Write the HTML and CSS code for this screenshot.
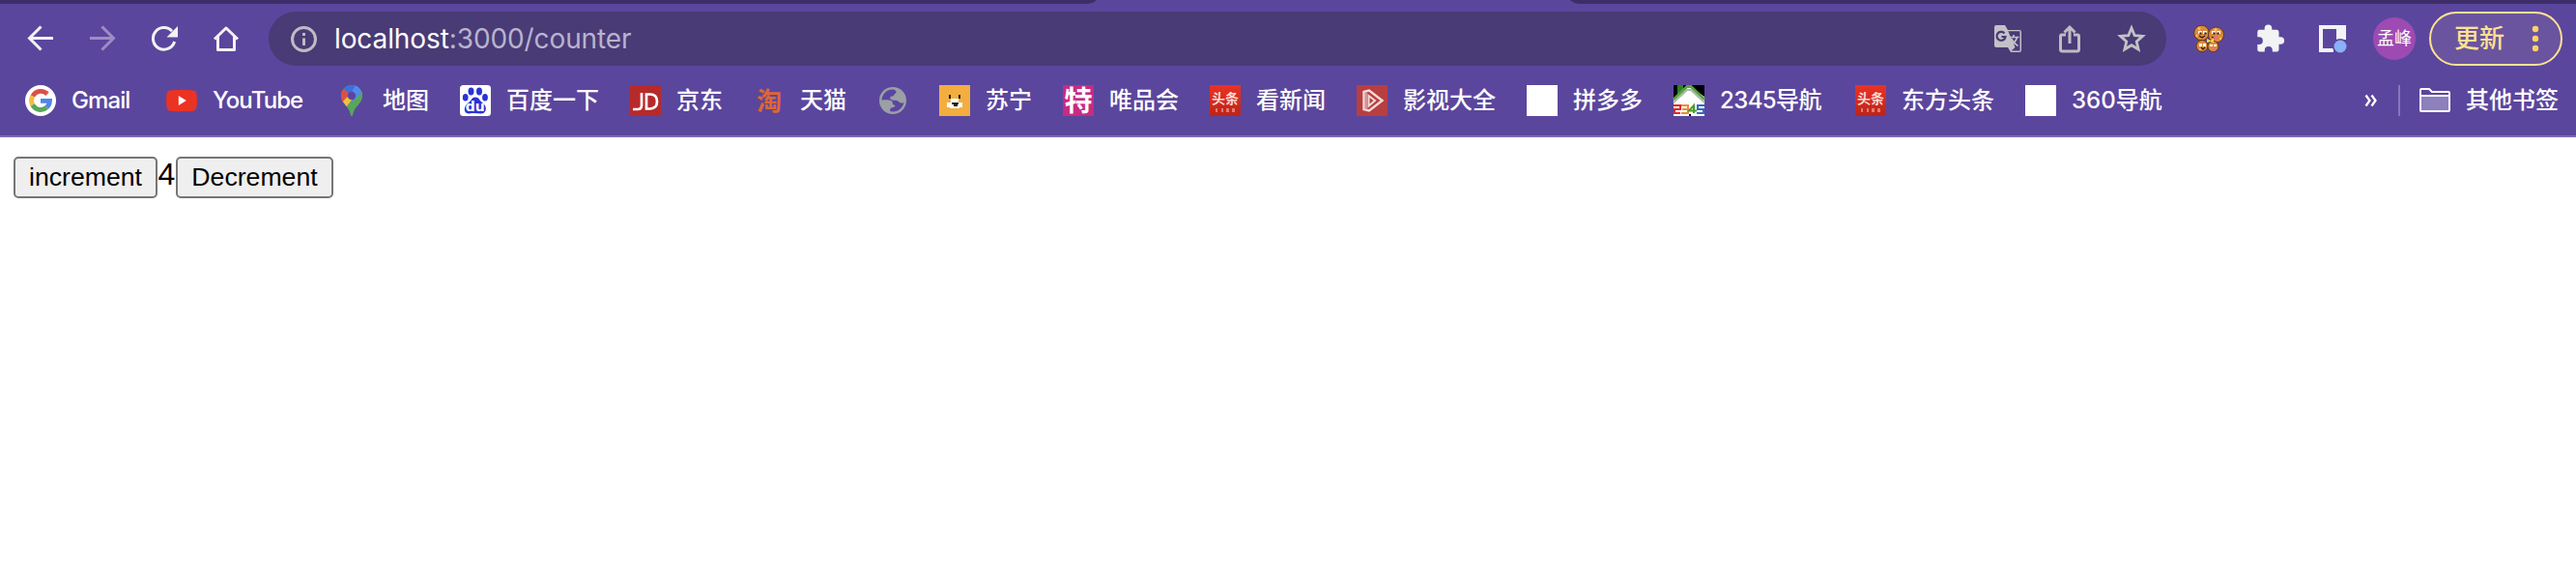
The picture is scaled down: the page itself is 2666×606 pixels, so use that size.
FILE: index.html
```html
<!DOCTYPE html>
<html lang="zh-CN">
<head>
<meta charset="utf-8">
<title>localhost:3000/counter</title>
<link rel="stylesheet" href="styles.css">
</head>
<body>
<header class="chrome">
  <div class="tabstrip"><svg class="tab" width="512" height="4" viewBox="0 0 512 4"><path d="M0 4Q7 4 11 0H501Q505 4 512 4Z" fill="#5b469d"/></svg></div>
  <div class="toolbar">
    <span class="cell"><svg width="32" height="32" viewBox="0 0 32 32" fill="none" stroke="#f1f3f4" stroke-width="3"><path d="M29 15.500H5M16.500 3.500L4.500 15.500L16.500 27.500"/></svg></span>
    <span class="cell"><svg width="32" height="32" viewBox="0 0 32 32" fill="none" stroke="#9c8dc4" stroke-width="3"><path d="M3 15.500H27M15.500 3.500L27.500 15.500L15.500 27.500"/></svg></span>
    <span class="cell"><svg width="32" height="32" viewBox="0 0 32 32"><path d="M26.600 19A11.300 11.300 0 1 1 24 8.200" fill="none" stroke="#f1f3f4" stroke-width="3"/><path d="M30 3V14.500H18.500Z" fill="#f1f3f4"/></svg></span>
    <span class="cell"><svg width="32" height="32" viewBox="0 0 32 32" fill="none" stroke="#f1f3f4" stroke-width="3" stroke-linejoin="round"><path d="M4 16.500L16 5L28 16.500M7.500 14V27.500H24.500V14"/></svg></span>
    <div class="omnibox">
      <svg width="32" height="32" viewBox="0 0 32 32"><circle cx="16.500" cy="16.500" r="12" fill="none" stroke="#bdbcc2" stroke-width="3"/><path d="M15 10H18V13H15ZM15 15.500H18V23H15Z" fill="#bdbcc2"/></svg>
      <span class="url"><span class="host">localhost</span>:3000/counter</span>
      <span class="cell end"><svg width="32" height="32" viewBox="0 0 32 32"><path d="M4 2H13L16 7H28Q30 7 30 9V28Q30 30 28 30H19L16 25H4Q2 25 2 23V4Q2 2 4 2Z" fill="#c3c1c7"/><path d="M16.300 8.300H28.500V28.500H19.500L23.500 25Z" fill="#483b76"/><path d="M12.500 10.500A4.500 4.500 0 1 0 13.500 14H9.500" fill="none" stroke="#483b76" stroke-width="2.200"/><path d="M17.500 14.500H27.500M22 12V14.500M25.500 14.500Q24 20 18.500 23.500M19.500 16Q22 21 26.500 23.500" fill="none" stroke="#c3c1c7" stroke-width="1.700"/></svg></span>
      <span class="cell"><svg width="32" height="32" viewBox="0 0 32 32" fill="none" stroke="#bdbcc2" stroke-width="3"><path d="M12 12H8Q6.500 12 6.500 13.500V27Q6.500 29 8.500 29H23.500Q25.500 29 25.500 27V13.500Q25.500 12 24 12H20M16 21V5M10.500 9.500L16 4L21.500 9.500"/></svg></span>
      <span class="cell"><svg width="32" height="32" viewBox="0 0 32 32" fill="none" stroke="#c3c1c7" stroke-width="2.800"><path d="M16 5L19.200 12.700L27.500 13.400L21.200 18.900L23.100 27L16 22.700L8.900 27L10.800 18.900L4.500 13.400L12.800 12.700Z"/></svg></span>
    </div>
    <span class="cell ext"><svg width="32" height="32" viewBox="0 0 32 32"><g fill="#d98c3c" stroke="#6b3511" stroke-width="1"><circle cx="8.500" cy="10" r="7.800"/><circle cx="23.500" cy="12" r="8"/><circle cx="9" cy="23.500" r="6"/><circle cx="20.500" cy="24" r="5.600"/></g><g fill="#f2bd73"><circle cx="6" cy="5.500" r="1.500"/><circle cx="23" cy="6.500" r="1.600"/><circle cx="3.500" cy="13" r="1.200"/><circle cx="28" cy="16" r="1.200"/><circle cx="7" cy="27" r="1"/></g><g fill="#fff"><path d="M5 8H9V11H5ZM10 8H14V11H10ZM19 8H23V11H19ZM24 8H28V11H24ZM6 21H9V24H6ZM10 21H13V24H10ZM17 22H20V24H17ZM21 22H24V24H21Z"/></g><path d="M7 10H8V11H7ZM12 10H13V11H12ZM21 10H22V11H21ZM25 10H26V11H25ZM6 13L9 15L12 13M19 14L22 16M8 25L10 27L12 25" stroke="#351708" stroke-width="1.200" fill="none"/><circle cx="23" cy="15" r="2" fill="#ef6a92"/><circle cx="22" cy="27" r="1.400" fill="#ef6a92"/><path d="M14 16L18 18L21 15V20L18 19L14 20Z" fill="#f7de3c"/></svg></span>
    <span class="cell"><svg width="32" height="32" viewBox="0 0 32 32"><path d="M4.500 6.800H9.700V5.300A3.300 3.300 0 0 1 17.300 5.300V6.800H22Q24.500 6.800 24.500 9.300V14.200H26.300A3.600 3.600 0 0 1 26.300 21.800H24.500V27Q24.500 29.500 22 29.500H17.800V28A4 4 0 0 0 9.800 28V29.500H5Q2.300 29.500 2.300 27V22H4A3.900 3.900 0 0 0 4 14.200H2.300V9.200Q2.300 6.800 4.500 6.800Z" fill="#f1f3f4"/></svg></span>
    <span class="cell"><svg width="32" height="32" viewBox="0 0 32 32"><path d="M2 2H30V17H20V6H6V26H17V30H2Z" fill="#f1f3f4"/><circle cx="24" cy="24" r="8" fill="#5b469d"/><circle cx="24" cy="24" r="6.500" fill="#8ab0f5"/></svg></span>
    <span class="cell"><span class="avatar">孟峰</span></span>
    <div class="update"><span>更新</span><svg width="8" height="28" viewBox="0 0 8 28" fill="#fdd268"><circle cx="4" cy="4" r="3.200"/><circle cx="4" cy="14" r="3.200"/><circle cx="4" cy="24" r="3.200"/></svg></div>
  </div>
  <nav class="bookmarks">
    <div class="mark"><svg class="ico" viewBox="0 0 32 32"><circle cx="16" cy="16" r="16" fill="#fff"/><g fill="none" stroke-width="4.800"><path d="M7.800 11.500A9.500 9.500 0 0 1 23 9.200" stroke="#dc5044"/><path d="M7.700 11.500A9.500 9.500 0 0 0 7.700 20.500" stroke="#f2bd42"/><path d="M7.700 20.500A9.500 9.500 0 0 0 22.300 23.100" stroke="#58a55c"/><path d="M22.300 23.100A9.500 9.500 0 0 0 25.500 16.300H16" stroke="#4f86ec"/></g></svg><span class="gmail">Gmail</span></div>
    <div class="mark"><svg class="ico" viewBox="0 0 32 32"><path d="M4 5.500Q16 4.200 28 5.500Q31 5.800 31.500 9Q32.500 16 31.500 23Q31 26.300 28 26.700Q16 28 4 26.700Q1 26.300 .5 23Q-.5 16 .5 9Q1 5.800 4 5.500Z" fill="#ea3323"/><path d="M12.800 11V21L20.800 16Z" fill="#fff"/></svg><span class="yt">YouTube</span></div>
    <div class="mark"><svg class="ico" viewBox="0 0 32 32"><clipPath id="pin"><path d="M16 0A11 11 0 0 1 27 11C27 19 18 22 17 31Q16 33 15 31C14 22 5 19 5 11A11 11 0 0 1 16 0Z"/></clipPath><g clip-path="url(#pin)"><path d="M0 0H32V32H0Z" fill="#58a55c"/><path d="M7 4L10 0H21L16 11Z" fill="#3b70dc"/><path d="M20 0H30V6L17 20L14 11Z" fill="#548af0"/><path d="M28 5V32H14L7 22L18 16Z" fill="#58a55c"/><path d="M7 22L4 16L9 12L17 14L10 23Z" fill="#f2bd42"/><path d="M4 5L8 4L14 9L7 17H4Z" fill="#dc5044"/></g><circle cx="16" cy="11" r="4.200" fill="#5b469d"/></svg><span>地图</span></div>
    <div class="mark"><svg class="ico" viewBox="0 0 32 32"><rect width="32" height="32" rx="3.500" fill="#fff"/><g fill="#2932d6"><ellipse cx="11.500" cy="6.500" rx="3" ry="4"/><ellipse cx="20" cy="6.500" rx="3" ry="4"/><ellipse cx="5.700" cy="12.800" rx="2.900" ry="3.800"/><ellipse cx="26" cy="12.800" rx="2.900" ry="3.800"/><path d="M16 12.500C20 12.500 20 16 24 19C29 23 27 29.500 22 29.500C18 29.500 14 28.500 10 29.500C4 30 3 23 8 19C12 16 12 12.500 16 12.500Z"/></g><text x="15.800" y="27.200" class="du">du</text></svg><span>百度一下</span></div>
    <div class="mark"><svg class="ico" viewBox="0 0 32 32"><path d="M0 0H32V32H0Z" fill="#b62a2a"/><path d="M12 8V21Q12 25 8 25H3M17 9.500V24.500H21Q28 24 28 17Q28 9.500 21 9.500Z" fill="none" stroke="#fff" stroke-width="2.700"/></svg><span>京东</span></div>
    <div class="mark"><svg class="ico" viewBox="0 0 32 32"><text x="16" y="25.500" class="tao">淘</text></svg><span>天猫</span></div>
    <div class="mark"><svg class="ico" viewBox="0 0 32 32"><circle cx="16" cy="16" r="14" fill="#9aa0a6"/><path d="M16.500 4.500C10 4 5 9 4.500 15.500C8 15 13 15 15 16.500C16.500 18 15 19.500 17 20.500C19.500 21 18 23 16 23C13.500 23.500 13 25 13 27C20 29 26 24.500 27.500 18C25 19 23.500 18.500 22 17C20 15 17.500 16.500 14.500 15C12 13.500 13.500 11.500 15.500 11.500C17.500 11.500 17 9 19 8.500C20.500 7.500 19 5 16.500 4.500Z" fill="#5b469d"/></svg></div>
    <div class="mark"><svg class="ico" viewBox="0 0 32 32"><path d="M0 0H32V32H0Z" fill="#f3ae3f"/><path d="M10 10H12V14H10ZM20 10H22V14H20Z" fill="#252018"/><path d="M12 14H20V18H24V23H21V24H11V23H8V18H12Z" fill="#fff"/><path d="M13 18H20V20H19V22H15V20H13Z" fill="#252018"/></svg><span>苏宁</span></div>
    <div class="mark"><svg class="ico" viewBox="0 0 32 32"><path d="M0 0H32V32H0Z" fill="#c62b86"/><text x="16" y="26.500" class="te">特</text></svg><span>唯品会</span></div>
    <div class="mark"><svg class="ico" viewBox="0 0 32 32"><defs><linearGradient id="red" x2="0" y2="1"><stop stop-color="#e93325"/><stop offset="1" stop-color="#bc2419"/></linearGradient></defs><path d="M0 0H32V32H0Z" fill="url(#red)"/><text x="16" y="18.500" class="tt">头条</text><path d="M6 24H8V28H6ZM12 24H14V28H12ZM17 24H20V28H17ZM23 24H26V28H23Z" fill="#e17b70"/></svg><span>看新闻</span></div>
    <div class="mark"><svg class="ico" viewBox="0 0 32 32"><path d="M0 0H32V32H0Z" fill="#b83f3f"/><g fill="none" stroke="#f3dada"><path d="M7.500 7L13 5.500L26.500 16L13 26.500L7.500 25Z" stroke-width="2.400"/><path d="M12.500 11V21.500L19 16Z" stroke-width="2"/><path d="M10 7V25" stroke="#d79494" stroke-width="2"/></g></svg><span>影视大全</span></div>
    <div class="mark"><i class="ico blank"></i><span>拼多多</span></div>
    <div class="mark"><svg class="ico" viewBox="0 0 32 32"><path d="M0 0H32V32H0Z" fill="#fff"/><path d="M0 0H32V12L16 1L0 14Z" fill="#000"/><path d="M4 0H10V7L4 10Z" fill="#2c8122"/><path d="M0 15L14 1.500H18L32 15" fill="none" stroke="#57a342" stroke-width="3"/><path d="M0 18L14 5H18L32 18" fill="none" stroke="#acb9a5" stroke-width="2"/><path d="M16 30H18V32H16Z" fill="#000"/><g fill="none" stroke-width="2"><path d="M0 21H7V25H1V29H7" stroke="#dc2d27"/><path d="M8 21H15V29H8M9 25H15" stroke="#ef8c37"/><path d="M21 29V21L16 26.500H24" stroke="#4b9b30"/><path d="M32 21H25V25H31V29H24" stroke="#3569c5"/></g></svg><span class="n2345">2345导航</span></div>
    <div class="mark"><svg class="ico" viewBox="0 0 32 32"><path d="M0 0H32V32H0Z" fill="url(#red)"/><text x="16" y="18.500" class="tt">头条</text><path d="M6 24H8V28H6ZM12 24H14V28H12ZM17 24H20V28H17ZM23 24H26V28H23Z" fill="#e17b70"/></svg><span>东方头条</span></div>
    <div class="mark"><i class="ico blank"></i><span>360导航</span></div>
    <div class="others"><svg class="more" width="14" height="14" viewBox="0 0 14 14" fill="none" stroke="#fff" stroke-width="2.300"><path d="M1.500 1.500L5.500 7L1.500 12.500M7.500 1.500L11.500 7L7.500 12.500"/></svg><i class="divider"></i><svg class="ico" viewBox="0 0 32 32"><path d="M1 25V5Q1 4 2 4H10L13 7H30Q31 7 31 8V26Q31 27 30 27H2Q1 27 1 26Z" fill="#5b469d"/><path d="M1 11H31V27H1Z" fill="#8e7fbd"/><path d="M1 26V5Q1 4 2 4H10L13 7H30Q31 7 31 8V26Q31 27 30 27H2Q1 27 1 26ZM1 11H31" fill="none" stroke="#fff" stroke-width="2"/></svg><span>其他书签</span></div>
  </nav>
</header>
<main class="page"><button class="inc">increment</button><span class="count">4</span><button class="dec">Decrement</button></main>
</body>
</html>
```
FILE: styles.css
```css
* { box-sizing: border-box; }
body { margin: 0; background: #fff; }
svg { display: block; flex: none; overflow: visible; }
.chrome {
  height: 142px;
  background: #5b469d;
  border-bottom: 2px solid #7c68b3;
  color: #fff;
  font-family: Inter, "Noto Sans CJK SC", sans-serif;
}
.tabstrip { height: 4px; background: #3d2d69; padding-left: 1124px; }
.toolbar { height: 72px; display: flex; align-items: center; padding-left: 10px; }
.cell { width: 64px; height: 56px; flex: none; display: flex; align-items: center; justify-content: center; }
.omnibox {
  width: 1964px; height: 56px; flex: none;
  margin-left: 12px; padding: 0 4px 0 20px;
  display: flex; align-items: center;
  border-radius: 28px; background: #483b76;
}
.url { margin-left: 16px; font-size: 28px; letter-spacing: -0.1px; line-height: 56px; color: #b9b3ce; white-space: nowrap; }
.host { color: #fff; }
.end { margin-left: auto; }
.ext { margin-left: 12px; }
.avatar { width: 44px; height: 44px; border-radius: 50%; background: #9d4bb3; font-size: 18px; line-height: 44px; text-align: center; white-space: nowrap; }
.update {
  width: 138px; height: 56px; margin-left: 4px; padding: 0 22px 0 24px; flex: none;
  display: flex; align-items: center; justify-content: space-between;
  border: 2px solid #fde293; border-radius: 28px; background: #6a549f;
  color: #fde293; font-size: 26px; font-weight: 500; line-height: 52px;
}
.bookmarks { height: 56px; display: flex; align-items: center; gap: 32px; padding: 0 18px 0 26px; font-size: 24px; line-height: 32px; white-space: nowrap; }
.mark { display: flex; align-items: center; gap: 16px; flex: none; }
.mark span, .others span { font-weight: 500; }
.ico { width: 32px; height: 32px; flex: none; }
.blank { background: #fff; }
.gmail { width: 66px; letter-spacing: -0.9px; }
.yt { width: 96px; letter-spacing: -0.9px; }
.n2345 { width: 108px; letter-spacing: -0.6px; }
.others { margin-left: auto; display: flex; align-items: center; }
.divider { width: 2px; height: 32px; margin: 0 20px 0 21px; background: #8576b8; }
.others span { margin-left: 16px; }
.du { font: bold 14px "DejaVu Sans", sans-serif; fill: #fff; text-anchor: middle; }
.tao { font: bold 26px "Noto Sans CJK SC", sans-serif; fill: #df6536; text-anchor: middle; }
.te { font: bold 29px "Noto Sans CJK SC", sans-serif; fill: #fff; text-anchor: middle; }
.tt { font: bold 14px "Noto Sans CJK SC", sans-serif; fill: #fbd9d2; text-anchor: middle; }
.page { display: flex; align-items: flex-start; padding: 20px 14px; font-family: "Liberation Sans", Arial, sans-serif; color: #000; }
.page button { height: 43px; padding: 0 0 1px; border: 2px solid #767676; border-radius: 5px; background: #efefef; color: #000; font: 26.67px/38px "Liberation Sans", Arial, sans-serif; }
.inc { width: 149px; }
.dec { width: 163px; }
.count { width: 19px; font-size: 32px; line-height: 37px; text-align: center; }
```
